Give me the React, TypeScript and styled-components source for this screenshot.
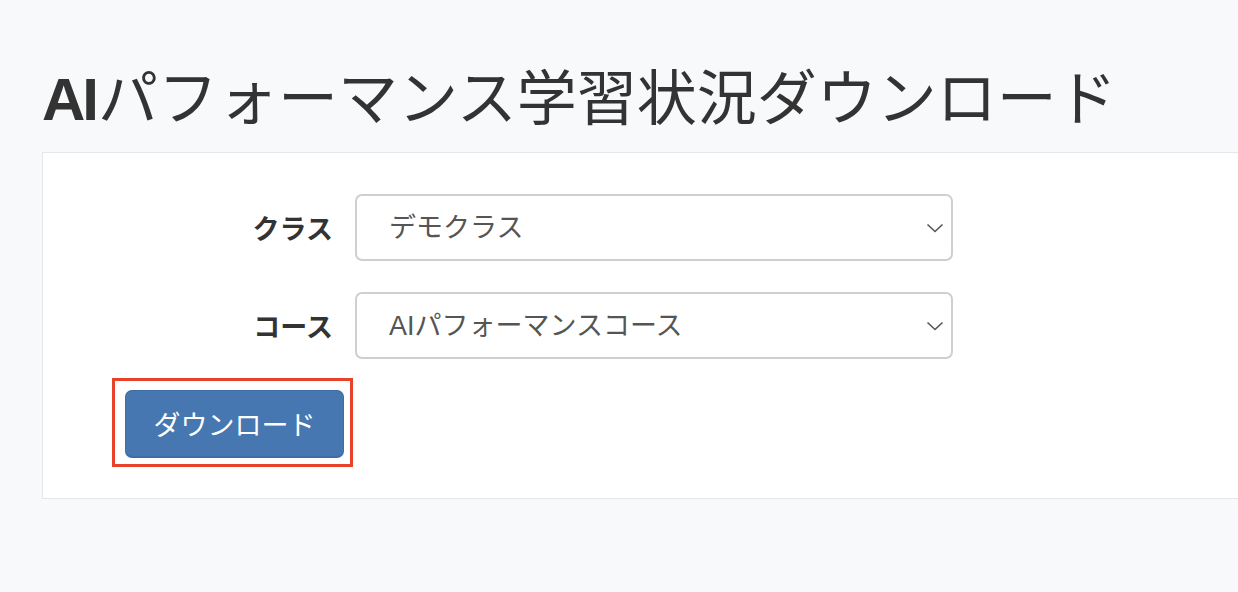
import React from "react";
import styled, { createGlobalStyle } from "styled-components";

const Global = createGlobalStyle`
  html, body {
    margin: 0;
    padding: 0;
    background: #f8f9fb;
    overflow: hidden;
  }
  body {
    font-family: "Liberation Sans", "Noto Sans CJK JP", sans-serif;
    color: #333;
  }
`;

const Page = styled.div`
  padding: 60px 0 0 42px;
  width: 1240px;
  box-sizing: border-box;
`;

const Title = styled.h1`
  margin: 0 0 12px 0;
  font-family: "Liberation Sans", "Noto Sans CJK JP", sans-serif;
  font-size: 60px;
  font-weight: 400;
  line-height: 80px;
  color: #333;
  white-space: nowrap;
`;

const Latin = styled.span`
  font-weight: 700;
  letter-spacing: -3px;
  margin-right: 2px;
`;

const Card = styled.div`
  background: #fff;
  border: 1px solid #e6e6e6;
  border-right: none;
  width: 1220px;
  box-sizing: border-box;
  padding: 41px 0 40px 0;
`;

const Form = styled.div`
  display: grid;
  grid-template-columns: 290px 598px;
  column-gap: 22px;
  row-gap: 31px;
  align-items: center;
`;

const Label = styled.label`
  justify-self: end;
  font-family: "Liberation Sans", "Noto Sans CJK JP", sans-serif;
  font-size: 27px;
  font-weight: 700;
  color: #333;
`;

const SelectWrap = styled.div`
  position: relative;
  height: 67px;
`;

const Select = styled.select`
  appearance: none;
  -webkit-appearance: none;
  width: 100%;
  height: 100%;
  box-sizing: border-box;
  border: 2px solid #cfcfcf;
  border-radius: 7px;
  background: #fff;
  padding: 0 50px 0 32px;
  font-family: "Liberation Sans", "Noto Sans CJK JP", sans-serif;
  font-size: 27px;
  color: #555;
  outline: none;
`;

const Chevron = styled.svg`
  position: absolute;
  right: 9px;
  top: 50%;
  transform: translateY(-50%);
  pointer-events: none;
`;

const Actions = styled.div`
  grid-column: 1 / span 2;
  padding-left: 82px;
`;

const Highlight = styled.div`
  position: relative;
  display: inline-block;
  &::after {
    content: "";
    position: absolute;
    left: -13px;
    top: -12px;
    right: -9px;
    bottom: -9px;
    border: 3px solid #e8432a;
    pointer-events: none;
  }
`;

const Button = styled.button`
  display: block;
  width: 219px;
  height: 68px;
  background: #4677b0;
  border: 1px solid #3f6da3;
  border-bottom-width: 2px;
  border-radius: 7px;
  color: #fff;
  font-family: "Liberation Sans", "Noto Sans CJK JP", sans-serif;
  font-size: 27px;
  padding: 0;
  cursor: pointer;
`;

const ChevronIcon = () => (
  <Chevron width="18" height="12" viewBox="0 0 18 12">
    <path d="M1.5 2.5 L9 9.5 L16.5 2.5" fill="none" stroke="#555" strokeWidth="1.6" />
  </Chevron>
);

export default function App() {
  return (
    <>
      <Global />
      <Page>
        <Title>
          <Latin>AI</Latin>パフォーマンス学習状況ダウンロード
        </Title>
        <Card>
          <Form>
            <Label>クラス</Label>
            <SelectWrap>
              <Select defaultValue="demo">
                <option value="demo">デモクラス</option>
              </Select>
              <ChevronIcon />
            </SelectWrap>
            <Label>コース</Label>
            <SelectWrap>
              <Select defaultValue="ai">
                <option value="ai">AIパフォーマンスコース</option>
              </Select>
              <ChevronIcon />
            </SelectWrap>
            <Actions>
              <Highlight>
                <Button type="button">ダウンロード</Button>
              </Highlight>
            </Actions>
          </Form>
        </Card>
      </Page>
    </>
  );
}
